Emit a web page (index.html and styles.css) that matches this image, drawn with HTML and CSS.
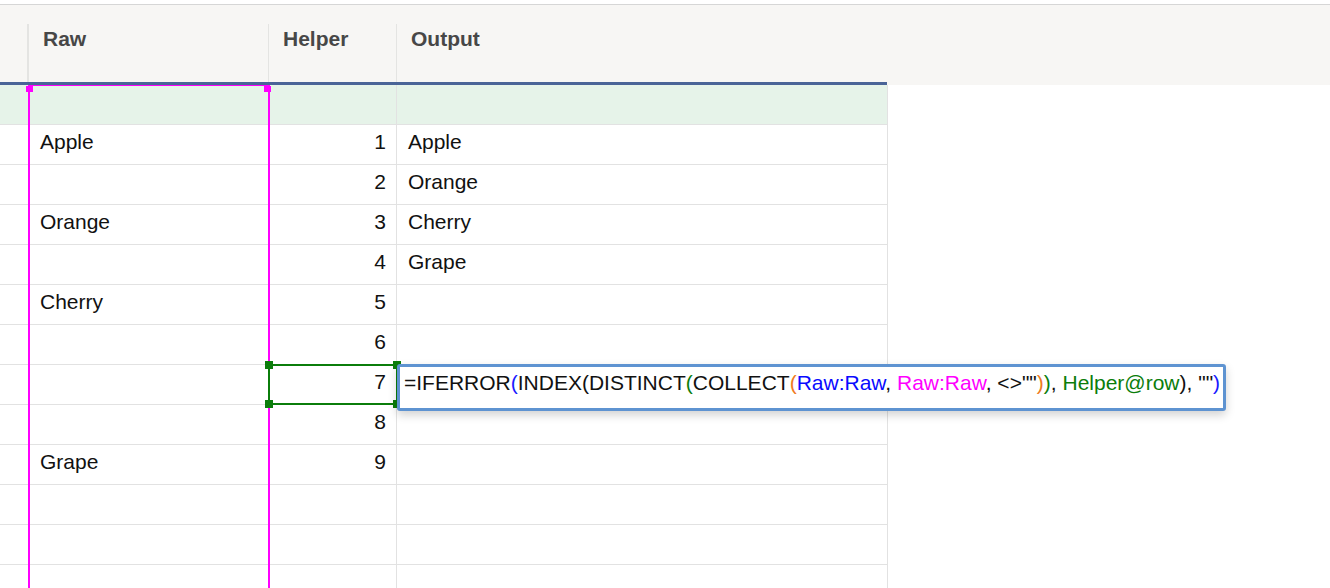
FILE: index.html
```
<!DOCTYPE html>
<html>
<head>
<meta charset="utf-8">
<link rel="stylesheet" href="styles.css">
</head>
<body>
<div class="page">
  <div class="topgap"></div>
  <div class="header">
    <div class="head-grid">
      <div class="hcell hc0"></div>
      <div class="hcell">Raw</div>
      <div class="hcell">Helper</div>
      <div class="hcell hlast">Output</div>
    </div>
  </div>
  <div class="body-wrap">
    <div class="grid">
      <div class="row active"><div class="c c0"></div><div class="c c1"></div><div class="c c2"></div><div class="c c3"></div></div>
      <div class="row"><div class="c c0"></div><div class="c c1">Apple</div><div class="c c2">1</div><div class="c c3">Apple</div></div>
      <div class="row"><div class="c c0"></div><div class="c c1"></div><div class="c c2">2</div><div class="c c3">Orange</div></div>
      <div class="row"><div class="c c0"></div><div class="c c1">Orange</div><div class="c c2">3</div><div class="c c3">Cherry</div></div>
      <div class="row"><div class="c c0"></div><div class="c c1"></div><div class="c c2">4</div><div class="c c3">Grape</div></div>
      <div class="row"><div class="c c0"></div><div class="c c1">Cherry</div><div class="c c2">5</div><div class="c c3"></div></div>
      <div class="row"><div class="c c0"></div><div class="c c1"></div><div class="c c2">6</div><div class="c c3"></div></div>
      <div class="row"><div class="c c0"></div><div class="c c1"></div><div class="c c2">7</div><div class="c c3"></div></div>
      <div class="row"><div class="c c0"></div><div class="c c1"></div><div class="c c2">8</div><div class="c c3"></div></div>
      <div class="row"><div class="c c0"></div><div class="c c1">Grape</div><div class="c c2">9</div><div class="c c3"></div></div>
      <div class="row"><div class="c c0"></div><div class="c c1"></div><div class="c c2"></div><div class="c c3"></div></div>
      <div class="row"><div class="c c0"></div><div class="c c1"></div><div class="c c2"></div><div class="c c3"></div></div>
      <div class="row"><div class="c c0"></div><div class="c c1"></div><div class="c c2"></div><div class="c c3"></div></div>
    </div>

    <div class="range">
      <span class="handle hl"></span>
      <span class="handle hr"></span>
    </div>

    <div class="sel">
      <span class="sq tl"></span><span class="sq tr"></span>
      <span class="sq bl"></span><span class="sq br"></span>
    </div>

    <div class="editor"><span class="k">=IFERROR</span><span class="p1">(</span><span class="k">INDEX(DISTINCT</span><span class="p3">(</span><span class="k">COLLECT</span><span class="p4">(</span><span class="r1">Raw:Raw</span><span class="k">, </span><span class="r2">Raw:Raw</span><span class="k">, &lt;&gt;""</span><span class="p4">)</span><span class="p3">)</span><span class="k">, </span><span class="p3">Helper@row</span><span class="k">), ""</span><span class="p1">)</span></div>
  </div>
</div>
</body>
</html>
```
FILE: styles.css
```
* { box-sizing: border-box; }
html, body { margin: 0; padding: 0; background: #fff; }
body {
  font-family: "Liberation Sans", Arial, sans-serif;
  color: #111;
  width: 1330px;
  height: 588px;
  overflow: hidden;
}
.page { position: relative; }
.topgap { height: 4px; background: #fff; }
.header {
  height: 81px;
  background: #f7f6f4;
  border-top: 1px solid #d6d6d6;
}
.head-grid {
  display: grid;
  grid-template-columns: 29px 240px 128px 490px;
  width: 887px;
  height: 80px;
  border-bottom: 3px solid #4a6497;
}
.hcell {
  border-right: 1px solid #e4e4e2;
  margin-top: 19px;
  padding: 3px 0 0 14px;
  font-weight: bold;
  font-size: 21px;
  color: #474747;
}
.hc0 { border-right: 2px solid #e4e4e2; }
.hlast { border-right: none; }

.body-wrap { position: relative; }
.grid { width: 888px; }
.row {
  display: grid;
  grid-template-columns: 29px 240px 128px 491px;
  height: 40px;
  border-bottom: 1px solid #e2e2e2;
}
.row.active { background: #e6f3e9; }
.c {
  font-size: 21px;
  padding: 5px 10px 0 10px;
  border-right: 1px solid #e2e2e2;
  white-space: nowrap;
}
.c0 { padding: 0; }
.c1 { padding-left: 11px; }
.c2 { text-align: right; }
.c3 { padding-left: 11px; }

.range {
  position: absolute;
  left: 28px;
  top: 0;
  width: 242px;
  height: 520px;
  border-left: 2px solid #ff00ff;
  border-right: 2px solid #ff00ff;
  border-top: 1px solid #ff00ff;
}
.handle {
  position: absolute;
  top: 0;
  width: 7px;
  height: 6px;
  background: #ff00ff;
}
.hl { left: -4px; }
.hr { right: -3px; }

.sel {
  position: absolute;
  left: 268px;
  top: 279px;
  width: 130px;
  height: 41px;
  border: 2px solid #0b7d0b;
}
.sq {
  position: absolute;
  width: 8px;
  height: 8px;
  background: #0b7d0b;
}
.tl { left: -5px; top: -5px; }
.tr { right: -5px; top: -5px; }
.bl { left: -5px; bottom: -5px; }
.br { right: -5px; bottom: -5px; }

.editor {
  position: absolute;
  left: 397px;
  top: 279px;
  width: 829px;
  height: 47px;
  background: #fff;
  border: 3px solid #5e93d1;
  border-radius: 3px;
  box-shadow: 0 4px 10px rgba(0,0,0,0.18);
  font-size: 21px;
  padding: 4px 0 0 4px;
  white-space: nowrap;
  color: #111;
}
.p1 { color: #1a1aff; }
.p3 { color: #0b7d0b; }
.p4 { color: #f07a22; }
.r1 { color: #0a0aff; }
.r2 { color: #ff00ff; }
```
